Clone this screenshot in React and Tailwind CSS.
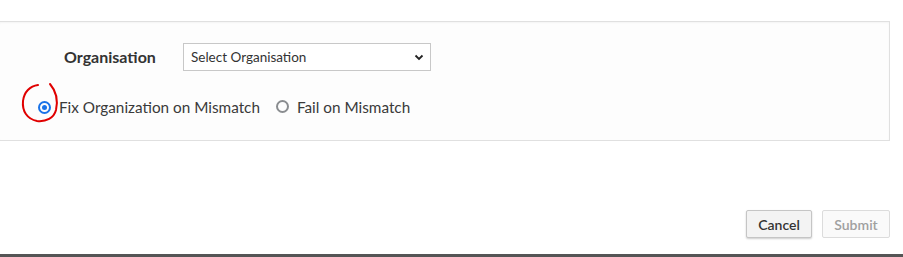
import React from "react";

function Radio({ checked }) {
  return (
    <span
      className={
        "inline-flex h-[13px] w-[13px] items-center justify-center rounded-full border-2 " +
        (checked ? "border-[#1a73e8]" : "border-[#8a8d90]")
      }
    >
      {checked && <span className="h-[5px] w-[5px] rounded-full bg-[#1a73e8]" />}
    </span>
  );
}

export default function App() {
  return (
    <div className="relative h-[257px] w-[903px] overflow-hidden bg-white font-['Lato',sans-serif] text-[#333]">
      <div className="flex h-full flex-col">
        <div className="h-[21px]" />
        <div className="ml-[-2px] mr-[13px] h-[120px] border border-[#e0e0e0] bg-[#fdfdfd] shadow-[inset_0_1px_2px_rgba(0,0,0,0.04)]">
          <div className="flex items-center pl-[65px] pt-[21px]">
            <span className="w-[119px] text-[16px] font-bold text-[#333]">Organisation</span>
            <div className="flex h-[28px] w-[248px] items-center justify-between border border-[#c8c8c8] bg-white pl-[7px] pr-[5px] text-[13.5px] text-[#333]">
              <span>Select Organisation</span>
              <svg width="12" height="12" viewBox="0 0 12 12">
                <path d="M2.5 4.5 L6 8 L9.5 4.5" fill="none" stroke="#222" strokeWidth="1.8" />
              </svg>
            </div>
          </div>
          <div className="flex items-center pl-[39px] pt-[25px] text-[15.3px] text-[#3a3a3a]">
            <Radio checked />
            <span className="ml-[8px]">Fix Organization on Mismatch</span>
            <span className="ml-[16px]">
              <Radio />
            </span>
            <span className="ml-[8px]">Fail on Mismatch</span>
          </div>
        </div>
        <div className="flex flex-1 items-end justify-end gap-[10px] pb-[16px] pr-[13px]">
          <button className="h-[28px] w-[66px] rounded-[2px] border border-[#c5c5c5] bg-[#f3f3f3] text-[14px] font-semibold text-[#333] shadow-[0_1px_2px_rgba(0,0,0,0.2)]">
            Cancel
          </button>
          <button className="h-[28px] w-[68px] rounded-[2px] border border-[#dcdcdc] bg-[#fafafa] text-[14px] font-semibold text-[#a0a0a0]">
            Submit
          </button>
        </div>
        <div className="h-[3px] bg-[#555]" />
      </div>
      <svg className="absolute left-0 top-0" width="70" height="130" viewBox="0 0 70 130">
        <path
          d="M38 85 C30 86 24 92 23 101 C22 111 27 119 37 121 C46 122 54 118 56 110 C58 101 56 91 50 84"
          fill="none"
          stroke="#e00000"
          strokeWidth="2"
          strokeLinecap="round"
        />
      </svg>
    </div>
  );
}
